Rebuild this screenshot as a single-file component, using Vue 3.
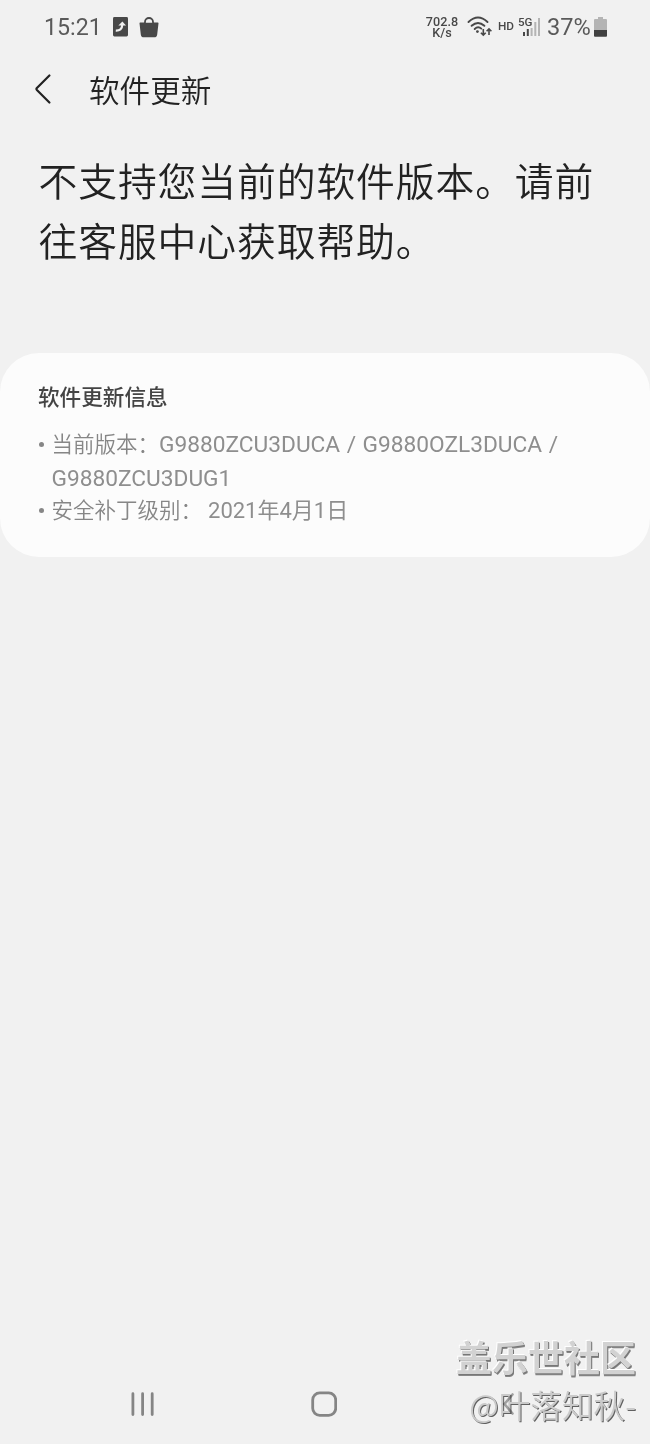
<template>
  <div class="phone">
    <header class="status-bar">
      <span class="time">15:21</span>
      <svg class="icon-share" viewBox="0 0 15 20">
        <rect width="15" height="19.5" rx="1.4" fill="#484848" />
        <path d="M2.8 13.6C6.6 13.8 9.2 12 9.2 8" fill="none" stroke="#f1f1f1" stroke-width="2.2" />
        <path d="M5.4 8.6L9.4 4.6L13 8.6Z" fill="#f1f1f1" />
      </svg>
      <svg class="icon-bag" viewBox="0 0 20 21">
        <path d="M6 6.5V5a4 4 0 0 1 8 0v1.5" fill="none" stroke="#484848" stroke-width="1.8" />
        <path d="M1.2 5.4H18.8Q19.6 5.4 19.5 6.3L18.2 17.4Q17.9 20.3 15 20.3H5Q2.1 20.3 1.8 17.4L.5 6.3Q.4 5.4 1.2 5.4Z" fill="#484848" />
        <path d="M6.8 5.6a3.2 2.6 0 0 1 6.4 0Z" fill="#f1f1f1" />
      </svg>
      <span class="spacer"></span>
      <div class="speed">
        <span>702.8</span>
        <span>K/s</span>
      </div>
      <svg class="icon-wifi" viewBox="0 -1 26 20">
        <g fill="none" stroke="#484848" stroke-width="1.9" stroke-linecap="round">
          <path d="M1.5 4Q11 -4.8 20.5 4" />
          <path d="M4.6 7.8Q11 2 17.4 7.8" />
          <path d="M7.7 11Q11 7.8 14.3 10.6" />
        </g>
        <circle cx="10.4" cy="13.6" r="1.4" fill="#484848" />
        <g fill="none" stroke="#484848" stroke-width="1.6">
          <path d="M16.3 11V17M13.9 14.7L16.3 17.1L18.7 14.7" />
          <path d="M22 17V10.8M19.6 13.2L22 10.8L24.4 13.2" />
        </g>
      </svg>
      <span class="hd">HD</span>
      <div class="signal">
        <svg viewBox="0 0 17 18">
          <rect x="0" y="14" width="2" height="4" fill="#484848" />
          <rect x="3.8" y="11" width="2" height="7" fill="#484848" />
          <rect x="7.6" y="7.5" width="2" height="10.5" fill="#b4b4b4" />
          <rect x="11.3" y="4" width="2" height="14" fill="#b4b4b4" />
          <rect x="15" y="0" width="2" height="18" fill="#b4b4b4" />
        </svg>
        <span class="net">5G</span>
      </div>
      <span class="percent">37%</span>
      <svg class="icon-battery" viewBox="0 0 13 20">
        <path d="M4 0H9V2H12Q13 2 13 3V13H0V3Q0 2 1 2H4Z" fill="#b4b4b4" />
        <path d="M0 13H13V18.7Q13 19.7 12 19.7H1Q0 19.7 0 18.7Z" fill="#414141" />
      </svg>
    </header>

    <div class="title-bar">
      <svg class="icon-back" viewBox="0 0 16 30">
        <path d="M14.4 1.5L1.9 14Q1 15 1.9 16L14.4 28.5" fill="none" stroke="#222" stroke-width="2.2" stroke-linecap="round" />
      </svg>
      <span class="title">软件更新</span>
    </div>

    <h1 class="message">不支持您当前的软件版本。请前往客服中心获取帮助。</h1>

    <section class="card">
      <h2>软件更新信息</h2>
      <ul>
        <li v-for="it in infos" :key="it.label">
          <span class="dot"></span>
          <div>
            <p>
              <span>{{ it.label }}</span>
              <span class="value" :class="it.type">{{ it.value }}</span>
            </p>
            <p v-if="it.extra" class="value">{{ it.extra }}</p>
          </div>
        </li>
      </ul>
    </section>

    <footer class="nav-bar">
      <svg class="nav-recent" viewBox="0 0 24 24">
        <path d="M1.9 1.7V22.5M11.6 1.7V22.5M21.2 1.7V22.5" stroke="#858585" stroke-width="2.8" stroke-linecap="round" />
      </svg>
      <svg class="nav-home" viewBox="0 0 26 26">
        <rect x="1.7" y="1.9" width="23" height="22.4" rx="7" fill="none" stroke="#858585" stroke-width="2.8" />
      </svg>
      <svg class="nav-back" viewBox="0 0 14 24">
        <path d="M11.5 2.5L3.5 12L11.5 21.5" fill="none" stroke="#a0a0a0" stroke-width="2.6" stroke-linecap="round" />
      </svg>
    </footer>

    <!-- 社区水印 -->
    <div class="watermark">
      <span class="site">盖乐世社区</span>
      <span class="user">@叶落知秋-</span>
    </div>
  </div>
</template>

<script setup>
const infos = [
  {
    label: "当前版本：",
    value: "G9880ZCU3DUCA / G9880OZL3DUCA /",
    extra: "G9880ZCU3DUG1",
    type: "version",
  },
  { label: "安全补丁级别：", value: "2021年4月1日", type: "date" },
];
</script>

<style>
body {
  background: #f1f1f1;
}
</style>

<style scoped>
.phone {
  position: relative;
  box-sizing: border-box;
  width: 650px;
  height: 1444px;
  display: flex;
  flex-direction: column;
  overflow: hidden;
  background: #f1f1f1;
  color: #222;
  font-family: Roboto, "Noto Sans CJK SC", sans-serif;
}
.status-bar {
  display: flex;
  align-items: center;
  height: 54px;
  padding: 0 43px 0 44px;
  color: #484848;
}
.time {
  width: 69px;
  font-size: 23.2px;
  font-weight: 400;
  color: #5a5a5a;
}
.icon-share {
  width: 15px;
  height: 20px;
}
.icon-bag {
  width: 20px;
  height: 21px;
  margin-left: 11px;
}
.spacer {
  flex: 1;
}
.speed {
  display: flex;
  flex-direction: column;
  align-items: center;
  width: 32px;
  font-size: 12.6px;
  line-height: 11.5px;
  font-weight: 500;
  letter-spacing: 0.1px;
}
.icon-wifi {
  width: 26px;
  height: 20px;
  margin-left: 9px;
  overflow: visible;
}
.hd {
  width: 20px;
  margin-left: 5px;
  font-size: 11.8px;
  line-height: 14px;
  font-weight: 500;
  margin-top: -2px;
}
.signal {
  position: relative;
  width: 22px;
  height: 20px;
}
.signal svg {
  display: block;
  width: 17px;
  height: 18px;
  margin: 1px 0 0 5px;
}
.net {
  position: absolute;
  left: 0;
  top: -1px;
  font-size: 11.6px;
  line-height: 12px;
  font-weight: 500;
  background: #f1f1f1;
}
.percent {
  width: 47px;
  margin-left: 7px;
  font-size: 23.6px;
  font-weight: 400;
  color: #5a5a5a;
}
.icon-battery {
  width: 13px;
  height: 20px;
}
.title-bar {
  display: flex;
  align-items: center;
  height: 70px;
  padding-left: 35px;
}
.icon-back {
  width: 16px;
  height: 30px;
}
.title {
  margin-left: 38px;
  font-size: 30.6px;
  font-weight: 350;
}
.message {
  height: 199px;
  margin: 29px 30px 0 38.5px;
  font-size: 38.8px;
  line-height: 60px;
  font-weight: 350;
  letter-spacing: 0.9px;
  word-break: break-all;
}
.card {
  box-sizing: border-box;
  height: 204px;
  margin-top: 1px;
  padding: 29px 38px 0;
  border-radius: 39px;
  background: #fcfcfc;
}
.card h2 {
  margin: 0;
  font-size: 21.6px;
  line-height: 32px;
  font-weight: 500;
  color: #444;
}
.card ul {
  list-style: none;
  margin: 14px 0 0;
  padding: 0;
}
.card li {
  display: flex;
  font-size: 21.5px;
  line-height: 34px;
  font-weight: 350;
  color: #868686;
}
.card li + li {
  margin-top: -2px;
}
.card p {
  display: flex;
  margin: 0;
  white-space: nowrap;
}
.card .value {
  font-size: 22.7px;
  font-weight: 400;
  word-spacing: 0.9px;
  color: #8e8e8e;
}
.card .value.date {
  margin-left: 6px;
  font-size: 22px;
}
.dot {
  width: 5px;
  height: 5px;
  margin: 14px 7.5px 0 1px;
  border-radius: 50%;
  background: #868686;
}
.nav-bar {
  display: flex;
  align-items: center;
  height: 80px;
  margin-top: auto;
  padding-left: 131px;
}
.nav-recent {
  width: 24px;
  height: 24px;
}
.nav-home {
  width: 26px;
  height: 26px;
  margin-left: 156px;
}
.nav-back {
  width: 14px;
  height: 24px;
  margin-left: 164px;
}
.watermark {
  position: absolute;
  right: 14px;
  bottom: 16px;
  display: flex;
  flex-direction: column;
  align-items: flex-end;
  font-family: "Noto Sans CJK SC", sans-serif;
  color: #d2d2d2;
}
.site {
  font-size: 36px;
  line-height: 48px;
  font-weight: 700;
  text-shadow: -1px -1px 0 #fff, 1px 1px 0 #777, 1px 2px 0 #888;
}
.user {
  font-size: 31.6px;
  line-height: 48px;
  font-weight: 350;
  color: #d6d6d6;
  text-shadow: 1px 1px 0 #666;
  mix-blend-mode: multiply;
}
</style>
